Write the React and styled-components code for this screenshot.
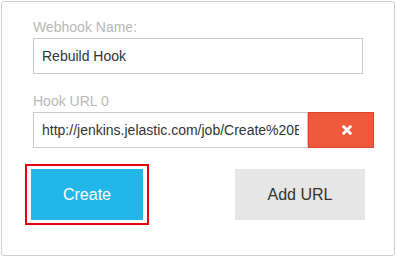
import React from 'react';
import styled, { createGlobalStyle } from 'styled-components';

const GlobalStyle = createGlobalStyle`
  html, body {
    margin: 0;
    padding: 0;
    background: #fff;
  }
  body {
    font-family: "Liberation Sans", Arial, sans-serif;
  }
`;

const Card = styled.div`
  box-sizing: border-box;
  margin: 1px;
  width: 394px;
  height: 255px;
  padding: 17px 31px 0 31px;
  border: 1px solid #cfcfcf;
  border-radius: 3px;
  background: #fff;
`;

const Label = styled.div`
  font-size: 14px;
  line-height: 16px;
  color: #b8b8b8;
  margin-top: ${(p) => (p.$first ? '0' : '19px')};
  margin-bottom: 3px;
`;

const Input = styled.input`
  box-sizing: border-box;
  display: block;
  flex: none;
  width: ${(p) => p.$width}px;
  height: 36px;
  margin: 0;
  padding: 0 8px;
  border: 1px solid #cccccc;
  border-radius: 0;
  font-family: inherit;
  font-size: 14px;
  color: #333;
  background: #fff;
  outline: none;
`;

const UrlRow = styled.div`
  display: flex;
  align-items: stretch;
  width: 341px;
`;

const RemoveButton = styled.button`
  box-sizing: border-box;
  flex: none;
  width: 66px;
  height: 36px;
  margin: 0;
  padding: 0 0 0 11px;
  display: flex;
  align-items: center;
  justify-content: center;
  background: #ee5a3b;
  border: 1px solid #d8462c;
  border-radius: 0;
  cursor: pointer;
`;

const Actions = styled.div`
  display: flex;
  justify-content: space-between;
  align-items: center;
  margin: 16px -2px 0 -8px;
`;

const Highlight = styled.div`
  border: 2px solid #e8000b;
  padding: 3px 4px;
`;

const Button = styled.button`
  box-sizing: border-box;
  display: block;
  width: ${(p) => p.$width}px;
  height: 51px;
  margin: 0;
  border: none;
  border-radius: 0;
  font-family: inherit;
  font-size: 16px;
  color: ${(p) => (p.$primary ? '#fff' : '#333')};
  background: ${(p) => (p.$primary ? '#23b7e9' : '#e6e6e6')};
  cursor: pointer;
`;

const TimesIcon = () => (
  <svg width="10" height="10" viewBox="0 0 10 10">
    <path d="M1.8 1.8 L8.2 8.2 M8.2 1.8 L1.8 8.2" stroke="#fff" strokeWidth="2.8" strokeLinecap="square" />
  </svg>
);

const App = () => {
  return (
    <>
      <GlobalStyle />
      <Card>
        <Label $first>Webhook Name:</Label>
        <Input $width={330} defaultValue="Rebuild Hook" />
        <Label>Hook URL 0</Label>
        <UrlRow>
          <Input $width={275} defaultValue="http://jenkins.jelastic.com/job/Create%20Build/build?token=rebuild" />
          <RemoveButton>
            <TimesIcon />
          </RemoveButton>
        </UrlRow>
        <Actions>
          <Highlight>
            <Button $primary $width={112}>Create</Button>
          </Highlight>
          <Button $width={130}>Add URL</Button>
        </Actions>
      </Card>
    </>
  );
};

export default App;
